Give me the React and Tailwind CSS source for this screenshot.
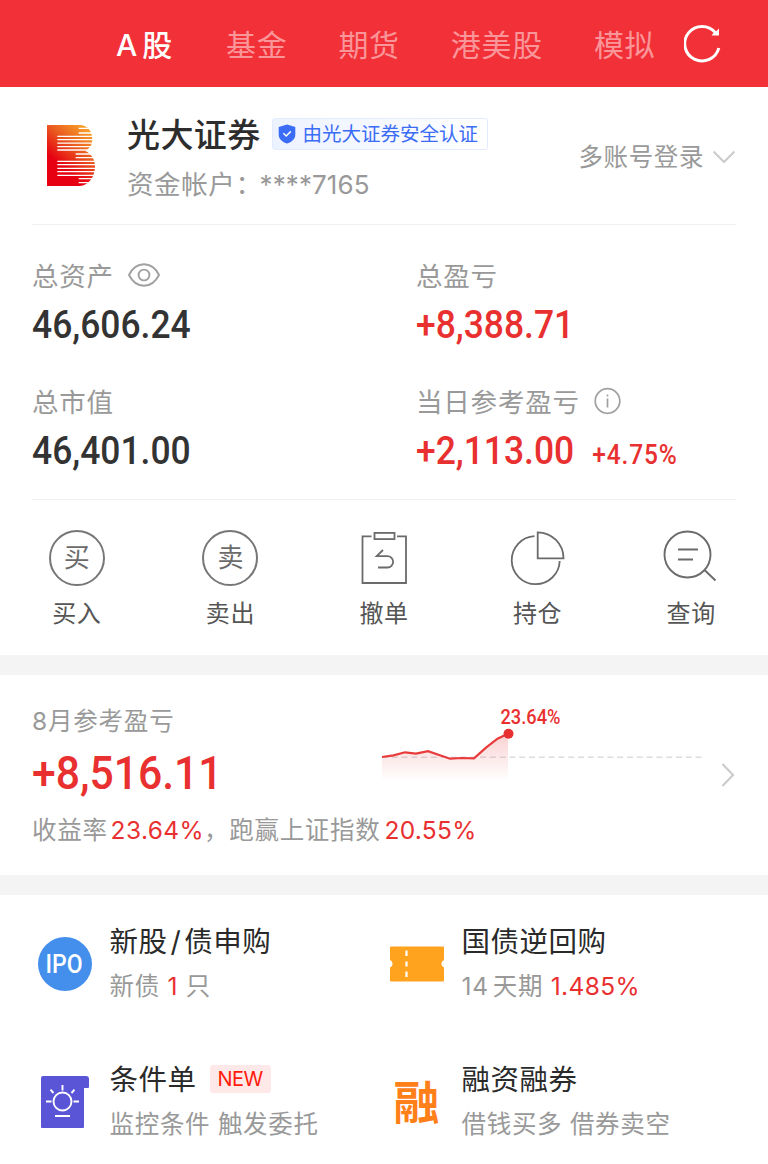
import React, { useState } from "react";

const TABS = ["A股", "基金", "期货", "港美股", "模拟"];

const TREND = [
	[1, 57],
	[12.5, 55.3],
	[24, 52.3],
	[35, 53.7],
	[47, 51.2],
	[69, 58.7],
	[81, 58],
	[93, 58.3],
	[105, 47.7],
	[116.5, 38.7],
	[127, 33.7],
];

const RefreshIcon = () => (
	<svg width="40" height="40" viewBox="0 0 40 40" fill="none">
		<path d="M31.500 8.800A17.300 17.300 0 1 0 34.800 24" stroke="#fff" strokeWidth="3" />
		<path d="M35 4.500V11.500H27.500L29 9.500 32 7.500Z" fill="#fff" />
	</svg>
);

const BrokerLogo = () => (
	<svg width="48" height="61" viewBox="0 0 144 183">
		<defs>
			<linearGradient id="logo" x1="0.8" y1="0" x2="0.35" y2="0.7">
				<stop offset="0" stopColor="#f9a62b" />
				<stop offset="0.5" stopColor="#ea5a1f" />
				<stop offset="1" stopColor="#e60012" />
			</linearGradient>
		</defs>
		<path
			d="M0 0H98C122 0 136 20 136 42C136 60 128 70 115 78C132 86 144 102 144 124C144 156 124 183 98 183H0Z"
			fill="url(#logo)"
		/>
		<g stroke="#fff" strokeWidth="4">
			<path d="M95 10H144M95 24H144M86 87H144M86 98H144M95 161H144M95 173H144" />
			<path d="M31 34H144M31 44H144M31 54.500H144M31 65H144M31 75H144" />
			<path d="M31 109H144M31 119H144M31 130H144M31 140H144M31 151H144" />
		</g>
	</svg>
);

const ShieldIcon = () => (
	<svg width="18" height="20" viewBox="0 0 18 20" fill="none">
		<path
			d="M9 .5 17.300 3V10.500C17.300 15 13.500 18.300 9 19.600C4.500 18.300 .7 15 .7 10.500V3Z"
			fill="#3a6cf6"
		/>
		<path d="M5.400 9.300 8.200 12 12.800 7.400" stroke="#fff" strokeWidth="1.500" />
	</svg>
);

const EyeIcon = () => (
	<svg width="32" height="24" viewBox="0 0 32 24" fill="none" stroke="#a0a0a0" strokeWidth="1.900">
		<path d="M1 12C4.500 5 10 1.300 16 1.300S27.500 5 31 12C27.500 19 22 22.700 16 22.700S4.500 19 1 12Z" />
		<circle cx="16" cy="12" r="5.400" />
	</svg>
);

const InfoIcon = () => (
	<svg width="28" height="28" viewBox="0 0 28 28" fill="none" stroke="#a0a0a0">
		<circle cx="13.500" cy="14" r="12.300" strokeWidth="1.700" />
		<path d="M13.500 11.500V20.500M13.500 7.500V9.500" strokeWidth="1.700" />
	</svg>
);

const CharCircle = ({ char }) => (
	<div className="flex h-14 w-14 items-center justify-center rounded-full border-2 border-[#777] text-[26px] leading-none text-[#6b6b6b]">
		{char}
	</div>
);

const CancelIcon = () => (
	<svg width="56" height="56" viewBox="0 0 56 56" fill="none" stroke="#6b6b6b" strokeWidth="1.800">
		<path d="M15.500 6.300H6.500V53H50V6.300H41" />
		<rect x="18.500" y="2.900" width="20" height="6.200" />
		<path d="M27 20 20.700 26.200H31.500A5.500 5.500 0 0 1 31.500 37.500H22" />
	</svg>
);

const HoldingIcon = () => (
	<svg width="56" height="56" viewBox="1.500 0 56 56" fill="none" stroke="#6b6b6b" strokeWidth="1.800">
		<path d="M26 6.200A24 24 0 1 0 51.200 31" />
		<path d="M29.200 2.300V28.300H55A26 26 0 0 0 29.200 2.300Z" />
	</svg>
);

const QueryIcon = () => (
	<svg width="56" height="56" viewBox="1 0 56 56" fill="none" stroke="#6b6b6b" strokeWidth="1.900">
		<circle cx="25.500" cy="24.500" r="23" />
		<path d="M42.500 40 53.500 50.500M16 19.500H36M16 29.500H31" />
	</svg>
);

const ACTIONS = [
	{ label: "买入", icon: <CharCircle char="买" /> },
	{ label: "卖出", icon: <CharCircle char="卖" /> },
	{ label: "撤单", icon: <CancelIcon /> },
	{ label: "持仓", icon: <HoldingIcon /> },
	{ label: "查询", icon: <QueryIcon /> },
];

const IpoIcon = () => (
	<div className="flex h-[54px] w-[54px] items-center justify-center rounded-full bg-[#448fec] font-[Roboto] text-[25px] leading-none font-medium text-white">
		<span className="scale-x-[0.92]">IPO</span>
	</div>
);

const TicketIcon = () => (
	<svg width="54" height="36" viewBox="0 0 54 36">
		<path
			d="M1 .5H53Q54 .5 54 1.500V14A4 4 0 0 0 54 21.500V34.500Q54 35.500 53 35.500H1Q0 35.500 0 34.500V21.500A4 4 0 0 0 0 14V1.500Q0 .5 1 .5Z"
			fill="#ffa31f"
		/>
		<path d="M16.500 4.500V10M16.500 15.500V20.500M16.500 25.500V31" stroke="#fff" strokeWidth="2.200" />
	</svg>
);

const ConditionIcon = () => (
	<svg width="50" height="54" viewBox="0 0 50 54" fill="none">
		<path
			d="M3 1H46Q49 1 49 4V12Q49 13 48 13H44V52Q44 53 43 53H2Q1 53 1 52V3Q1 1 3 1Z"
			fill="#5a55d6"
		/>
		<g stroke="#fff" strokeWidth="1.900">
			<circle cx="22.500" cy="26.500" r="9" />
			<path d="M22.500 10V15.500M6 26.500H11.500M33.500 26.500H39M10.500 14.700 13.500 18M34.500 14.700 31.500 18M15 41H30" />
		</g>
	</svg>
);

const MarginIcon = () => (
	<div className="text-[46px] leading-none font-bold text-[#ff8019]">融</div>
);

const Asset = ({ label, value, icon, extra, red }) => (
	<div>
		<div className="flex h-9 items-center gap-[14px] text-[26.5px] tracking-[0.8px] text-[#999]">
			<span className="pt-[3px]">{label}</span>
			{icon}
		</div>
		<div
			className={`mt-[10px] flex h-11 origin-left scale-x-[0.908] items-baseline gap-[20px] font-[Roboto] text-[39px] leading-[44px] font-medium ${
				red ? "text-[#e93030]" : "text-[#333]"
			}`}
		>
			<span>{value}</span>
			{extra && <span className="text-[27px] tracking-[0.9px]">{extra}</span>}
		</div>
	</div>
);

const Entry = ({ icon, title, badge, children }) => (
	<div className="flex h-[138px]">
		<div className="mt-4 flex h-[54px] w-[54px] shrink-0 items-center justify-center">
			{icon}
		</div>
		<div className="ml-[18px]">
			<div className="flex h-10 items-center text-[28.5px] tracking-[0.5px] text-[#2a2a2a]">
				<span className="pt-0.5">{title}</span>
				{badge && (
					<span className="ml-[13px] rounded-[3px] bg-[#ffe8e8] px-2 font-[Inter] text-[20px] leading-7 tracking-tight text-[#ff1a0a]">
						{badge}
					</span>
				)}
			</div>
			<div className="mt-[7px] h-9 text-[24.5px] leading-9 tracking-[0.7px] text-[#999]">
				{children}
			</div>
		</div>
	</div>
);

const App = () => {
	const [activeTab, setActiveTab] = useState("A股");
	const line = TREND.map((p) => p.join(",")).join(" ");

	return (
		<div className="h-[1164px] w-[768px] overflow-hidden bg-white font-['Inter','Noto_Sans_CJK_SC',sans-serif] whitespace-nowrap">
			{/* Market tabs */}
			<header className="flex h-[87px] items-center bg-[#f23037] pl-[116px]">
				<nav className="flex gap-[51px] pt-[3px] text-[30px] tracking-[0.7px]">
					{TABS.map((tab) => (
						<button
							key={tab}
							onClick={() => setActiveTab(tab)}
							className={`first:w-[59px] first:text-left first:first-letter:tracking-[5px] ${
								activeTab === tab ? "font-medium text-white" : "text-[#fa9599]"
							}`}
						>
							{tab}
						</button>
					))}
				</nav>
				<div className="ml-[29px]">
					<RefreshIcon />
				</div>
			</header>

			{/* Account */}
			<section className="mx-8 flex h-[138px] items-start border-b border-[#f2f2f2]">
				<div className="mt-[38px] ml-[15px]">
					<BrokerLogo />
				</div>
				<div className="mt-[22px] ml-8">
					<div className="flex h-[50px] items-center">
						<h1 className="pt-[3px] text-[33px] font-medium tracking-[0.4px] text-[#2d2d2d]">光大证券</h1>
						<div className="ml-[11px] flex h-8 w-[216px] items-center gap-[7px] rounded-[3px] border border-[#e3ebff] bg-linear-to-r from-[#ecf2ff] to-white pl-[5px] text-[19.5px] text-[#3a6cf6]">
							<ShieldIcon />
							<span className="pt-0.5">由光大证券安全认证</span>
						</div>
					</div>
					<div className="mt-[7px] h-9 text-[26.5px] leading-9 tracking-[0.6px] text-[#999]">
						资金帐户：<span className="-ml-[3px] text-[26px] tracking-[0.1px]">****7165</span>
					</div>
				</div>
				<div className="mt-[50px] ml-auto flex h-10 items-center gap-2 text-[24.5px] tracking-[0.6px] text-[#999]">
					多账号登录
					<svg width="24" height="14" viewBox="0 0 24 14" fill="none">
						<path d="M1.500 1.500 12 12 22.500 1.500" stroke="#ccc" strokeWidth="2.200" />
					</svg>
				</div>
			</section>

			{/* Assets */}
			<section className="mx-8 grid h-[275px] grid-cols-[384px_1fr] content-start gap-y-[36px] border-b border-[#f2f2f2] pt-8">
				<Asset label="总资产" value="46,606.24" icon={<EyeIcon />} />
				<Asset label="总盈亏" value="+8,388.71" red />
				<Asset label="总市值" value="46,401.00" />
				<Asset label="当日参考盈亏" value="+2,113.00" icon={<InfoIcon />} extra="+4.75%" red />
			</section>

			{/* Trade actions */}
			<section className="grid h-[155px] grid-cols-5 pt-[30px]">
				{ACTIONS.map((action) => (
					<button key={action.label} className="flex flex-col items-center">
						{action.icon}
						<span className="mt-[10px] text-[24px] leading-9 tracking-[0.6px] text-[#555]">
							{action.label}
						</span>
					</button>
				))}
			</section>

			<div className="h-5 bg-[#f4f4f4]" />

			{/* Monthly profit */}
			<section className="flex h-[200px] items-start px-8 pt-[26px]">
				<div className="w-[349px] shrink-0">
					<div className="h-10 text-[24.5px] leading-10 tracking-[0.8px] text-[#999]">8月参考盈亏</div>
					<div className="mt-[5px] h-[54px] origin-left scale-x-[0.908] font-[Roboto] text-[47px] leading-[54px] font-medium text-[#e93030]">
						+8,516.11
					</div>
					<div className="mt-[10px] h-10 text-[24.5px] leading-10 tracking-[0.7px] text-[#999]">
						收益率<span className="ml-[3px] tracking-[0.4px] text-[#e93030]">23.64%</span>，跑赢上证指数
						<span className="ml-1 tracking-[0.3px] text-[#e93030]">20.55%</span>
					</div>
				</div>
				<svg width="322" height="84" viewBox="0 0 322 84" fill="none" className="-mt-px shrink-0">
					<defs>
						<linearGradient id="area" x1="0" y1="0" x2="0" y2="1">
							<stop offset="0" stopColor="#e93030" stopOpacity="0.22" />
							<stop offset="1" stopColor="#e93030" stopOpacity="0" />
						</linearGradient>
					</defs>
					<path d="M1 57.300H321" stroke="#ddd" strokeWidth="1.600" strokeDasharray="6 3.800" />
					<polygon points={`${line} 127,81 1,81`} fill="url(#area)" />
					<polyline points={line} stroke="#e93b3b" strokeWidth="2.200" />
					<circle cx="127.500" cy="33.700" r="5" fill="#e93030" />
					<text
						x="119.500"
						y="24"
						textLength="60"
						lengthAdjust="spacingAndGlyphs"
						className="fill-[#e93030] font-[Roboto] text-[20px] font-medium"
					>
						23.64%
					</text>
				</svg>
				<svg width="14" height="26" viewBox="0 0 14 26" fill="none" className="mt-[61px] ml-[18px] shrink-0">
					<path d="M1.500 2 12 13 1.500 24" stroke="#ccc" strokeWidth="2.200" />
				</svg>
			</section>

			<div className="h-5 bg-[#f4f4f4]" />

			{/* Business entries */}
			<section className="grid grid-cols-[352px_1fr] pt-[26px] pl-[37.5px]">
				<Entry
					icon={<IpoIcon />}
					title={
						<>
							新股<span className="mx-[3px]">/</span>债申购
						</>
					}
				>
					新债 <span className="text-[#e93030]">1</span> 只
				</Entry>
				<Entry icon={<TicketIcon />} title="国债逆回购">
					<span className="mr-1">14</span>天期 <span className="tracking-[0.4px] text-[#e93030]">1.485%</span>
				</Entry>
				<Entry icon={<ConditionIcon />} title="条件单" badge="NEW">
					监控条件 触发委托
				</Entry>
				<Entry icon={<MarginIcon />} title="融资融券">
					借钱买多 借券卖空
				</Entry>
			</section>
		</div>
	);
};

export default App;
